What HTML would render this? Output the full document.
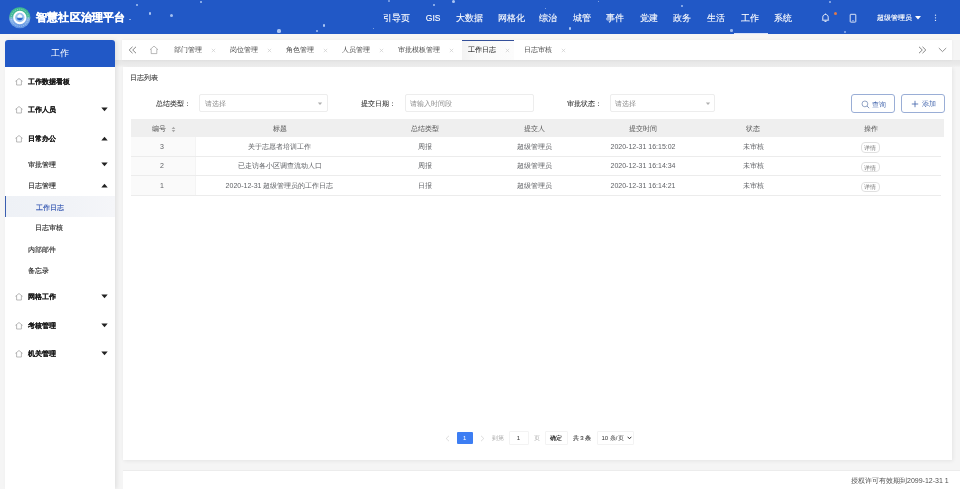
<!DOCTYPE html>
<html><head><meta charset="utf-8">
<style>
*{box-sizing:border-box;margin:0;padding:0}
html,body{width:960px;height:489px;overflow:hidden}
body{position:relative;will-change:transform;background:#f5f5f5;font-family:"Liberation Sans",sans-serif;color:#333;font-size:7px;line-height:1}
.a{position:absolute;white-space:nowrap}
#hdr{left:0;top:0;width:960px;height:34px;background:#2158c6;overflow:hidden}
#hdr .t{color:#fff;font-size:8.5px;top:14px;-webkit-text-stroke:0.1px #fff}
#side{left:5px;top:40px;width:110px;height:449px;background:#fff;border-radius:3px 3px 0 0;box-shadow:2px 0 4px rgba(0,0,0,.08)}
#sidehd{left:5px;top:40px;width:110px;height:27px;background:#2158c6;border-radius:3px 3px 0 0;color:#fff;font-size:9px;text-align:center;line-height:27px}
.mi{left:28px;font-size:7px;color:#2a2a2a;-webkit-text-stroke:0.12px}
.mb{font-weight:bold;color:#1a1a1a;-webkit-text-stroke:0.1px}
#strip{left:0;top:34px;width:960px;height:6px;background:#f7f6f4}
#tband{left:115px;top:60px;width:845px;height:7px;background:linear-gradient(#e5e5e5,#ebebeb 70%,#f2f2f2)}
#tabs{left:122px;top:40px;width:830px;height:20px;background:#fff;box-shadow:0 0 3px rgba(0,0,0,.05)}
.tab{top:45.8px;color:#4a4a4a;font-size:7px}
.x{top:47px;color:#bbb;font-size:6px}
#card{left:123px;top:67px;width:829px;height:393px;background:#fff;box-shadow:1px 1px 4px rgba(0,0,0,.07)}
.lbl{color:#2a2a2a;-webkit-text-stroke:0.05px}.ph{color:#8c8c8c}.inp{border:1px solid #ededed;border-radius:2px;background:#fff}.btn{border:1px solid #9aaed6;border-radius:3px}.th{color:#555}.td{color:#606266}.dbtn{border:1px solid #e0e0e0;border-radius:4px}.pgb{border:1px solid #f3f3f3;border-radius:1px;color:#333}
#foot{left:123px;top:470px;width:837px;height:19px;background:#fff;border-top:1px solid #ececec}
</style></head><body>
<div id="hdr" class="a"><div class="a" style="left:136.2px;top:4.2px;width:1.6px;height:1.6px;border-radius:50%;background:rgba(205,225,255,0.70)"></div><div class="a" style="left:148.8px;top:12.3px;width:2.4px;height:2.4px;border-radius:50%;background:rgba(205,225,255,0.80)"></div><div class="a" style="left:169.9px;top:13.8px;width:3.2px;height:3.2px;border-radius:50%;background:rgba(205,225,255,0.75)"></div><div class="a" style="left:200.2px;top:1.4px;width:1.6px;height:1.6px;border-radius:50%;background:rgba(205,225,255,0.70)"></div><div class="a" style="left:129.1px;top:18.6px;width:1.8px;height:1.8px;border-radius:50%;background:rgba(205,225,255,0.70)"></div><div class="a" style="left:277.4px;top:29.4px;width:3.2px;height:3.2px;border-radius:50%;background:rgba(205,225,255,0.80)"></div><div class="a" style="left:315.6px;top:29.6px;width:2.8px;height:2.8px;border-radius:50%;background:rgba(205,225,255,0.75)"></div><div class="a" style="left:322.6px;top:24.3px;width:2.8px;height:2.8px;border-radius:50%;background:rgba(205,225,255,0.80)"></div><div class="a" style="left:372.8px;top:27.9px;width:1.2px;height:1.2px;border-radius:50%;background:rgba(205,225,255,0.70)"></div><div class="a" style="left:432.8px;top:4.0px;width:1.8px;height:1.8px;border-radius:50%;background:rgba(205,225,255,0.75)"></div><div class="a" style="left:452.0px;top:-0.1px;width:3.0px;height:3.0px;border-radius:50%;background:rgba(205,225,255,0.80)"></div><div class="a" style="left:545.0px;top:7.5px;width:1.2px;height:1.2px;border-radius:50%;background:rgba(205,225,255,0.70)"></div><div class="a" style="left:568.7px;top:27.2px;width:2.6px;height:2.6px;border-radius:50%;background:rgba(205,225,255,0.80)"></div><div class="a" style="left:597.7px;top:0.6px;width:1.6px;height:1.6px;border-radius:50%;background:rgba(205,225,255,0.70)"></div><div class="a" style="left:680.6px;top:4.8px;width:2.4px;height:2.4px;border-radius:50%;background:rgba(205,225,255,0.75)"></div><div class="a" style="left:730.1px;top:29.1px;width:2.6px;height:2.6px;border-radius:50%;background:rgba(205,225,255,0.70)"></div><div class="a" style="left:828.6px;top:1.0px;width:2.4px;height:2.4px;border-radius:50%;background:rgba(205,225,255,0.70)"></div><div class="a" style="left:843.7px;top:30.7px;width:2.6px;height:2.6px;border-radius:50%;background:rgba(205,225,255,0.65)"></div><div class="a" style="left:387.5px;top:0.0px;width:2.0px;height:2.0px;border-radius:50%;background:rgba(205,225,255,0.60)"></div>
  <svg class="a" style="left:8px;top:6px" width="24" height="24" viewBox="0 0 24 24">
  <defs><linearGradient id="lg" x1="0" y1="0" x2="0" y2="1"><stop offset="0" stop-color="#3dbb8c"/><stop offset="0.42" stop-color="#45b89a"/><stop offset="0.58" stop-color="#86b3e8"/><stop offset="1" stop-color="#5b8fe2"/></linearGradient></defs>
  <circle cx="11.75" cy="11.75" r="10.6" fill="url(#lg)"/>
  <circle cx="11.75" cy="11.75" r="8.6" fill="none" stroke="#e8f4ff" stroke-width="0.9" stroke-dasharray="1.2 1" opacity="0.45"/>
  <circle cx="11.8" cy="11.5" r="5.7" fill="#9cc3ee" stroke="#fff" stroke-width="1.9"/>
  <path d="M11.8 7.9 L14.3 10 L13.8 11.9 H9.8 L9.3 10 Z" fill="#f4f9ff"/>
  <path d="M8.4 11.8 A3.5 3.5 0 0 0 15.2 11.8 Z" fill="#3b78d6"/>
  <path d="M9.8 12.6 A2.1 2.1 0 0 0 13.8 12.6 Z" fill="#2a5cc0"/>
</svg>
  <div class="a" style="left:36px;top:11.5px;color:#fff;font-size:10.6px;font-weight:bold;letter-spacing:0.2px;-webkit-text-stroke:0.25px #fff">智慧社区治理平台</div>
  <div class="a t" style="left:376.4px;width:40px;text-align:center">引导页</div>
  <div class="a t" style="left:413.2px;width:40px;text-align:center">GIS</div>
  <div class="a t" style="left:449.9px;width:40px;text-align:center">大数据</div>
  <div class="a t" style="left:491.1px;width:40px;text-align:center">网格化</div>
  <div class="a t" style="left:528.2px;width:40px;text-align:center">综治</div>
  <div class="a t" style="left:562.2px;width:40px;text-align:center">城管</div>
  <div class="a t" style="left:595.4px;width:40px;text-align:center">事件</div>
  <div class="a t" style="left:628.9px;width:40px;text-align:center">党建</div>
  <div class="a t" style="left:662.4px;width:40px;text-align:center">政务</div>
  <div class="a t" style="left:695.8px;width:40px;text-align:center">生活</div>
  <div class="a t" style="left:729.7px;width:40px;text-align:center">工作</div>
  <div class="a t" style="left:763.1px;width:40px;text-align:center">系统</div>
  <div class="a" style="left:734px;top:32.5px;width:34px;height:1.5px;background:rgba(235,242,255,.9)"></div>
  <div class="a t" style="left:877px;font-size:7px;top:14px;-webkit-text-stroke:0.12px #fff">超级管理员</div>
  <svg class="a" style="left:915px;top:15.5px" width="6" height="4" viewBox="0 0 6 4"><path d="M0 0H6L3 3.6Z" fill="#fff"/></svg>
  <svg class="a" style="left:934px;top:13px" width="3" height="9" viewBox="0 0 3 9"><circle cx="1.5" cy="2.2" r="0.65" fill="#e8efff"/><circle cx="1.5" cy="4.8" r="0.65" fill="#e8efff"/><circle cx="1.5" cy="7.4" r="0.65" fill="#e8efff"/></svg>
  <svg class="a" style="left:820px;top:12px" width="11" height="11" viewBox="0 0 11 11"><path d="M2.3 8.2 L2.8 7.4 V5.2 C2.8 3.6 3.9 2.5 5.5 2.5 C7.1 2.5 8.2 3.6 8.2 5.2 V7.4 L8.7 8.2 Z" fill="none" stroke="#fff" stroke-width="0.9" stroke-linejoin="round"/><path d="M4.5 9.4 H6.5" stroke="#fff" stroke-width="0.9"/><path d="M5.5 1.5 V2.5" stroke="#fff" stroke-width="0.8"/></svg>
  <div class="a" style="left:833.5px;top:12.3px;width:3px;height:3px;border-radius:50%;background:#e0794a"></div>
  <svg class="a" style="left:849px;top:13px" width="8" height="10" viewBox="0 0 8 10"><rect x="1.2" y="1.3" width="5.6" height="7.8" rx="0.6" fill="none" stroke="#fff" stroke-width="0.85"/><path d="M3.2 7.7 H4.8" stroke="#fff" stroke-width="0.6"/></svg>
</div>

<div id="strip" class="a"></div><div id="tband" class="a"></div>
<div id="side" class="a"></div>
<div id="sidehd" class="a">工作</div>
<div class="a mi mb" style="top:78.3px">工作数据看板</div>
<div class="a mi mb" style="top:106.3px">工作人员</div>
<div class="a mi mb" style="top:135.3px">日常办公</div>
<div class="a mi" style="top:161.3px">审批管理</div>
<div class="a mi" style="top:182.3px">日志管理</div>
<div class="a" style="left:5px;top:196.3px;width:110px;height:20.5px;background:linear-gradient(90deg,#eef1f6,#f1f3f7 60%,#f5f6f9);border-left:1px solid #3a5eb0"></div>
<div class="a mi" style="left:36px;top:204.3px;color:#2a4fae;-webkit-text-stroke:0.12px">工作日志</div>
<div class="a mi" style="left:35.3px;top:224.3px">日志审核</div>
<div class="a mi" style="top:246.3px">内部邮件</div>
<div class="a mi" style="top:267.3px">备忘录</div>
<div class="a mi mb" style="top:293.3px">网格工作</div>
<div class="a mi mb" style="top:322.3px">考核管理</div>
<div class="a mi mb" style="top:350.3px">机关管理</div>

<svg class="a" style="left:14.7px;top:76.9px" width="8" height="9" viewBox="0 0 8 9"><path d="M4 1.5 L7.3 4.2 H6.4 V8 H1.6 V4.2 H0.7 Z" fill="none" stroke="#808080" stroke-width="0.55" stroke-linejoin="miter"/></svg><svg class="a" style="left:14.7px;top:105.1px" width="8" height="9" viewBox="0 0 8 9"><path d="M4 1.5 L7.3 4.2 H6.4 V8 H1.6 V4.2 H0.7 Z" fill="none" stroke="#808080" stroke-width="0.55" stroke-linejoin="miter"/></svg><svg class="a" style="left:14.7px;top:133.8px" width="8" height="9" viewBox="0 0 8 9"><path d="M4 1.5 L7.3 4.2 H6.4 V8 H1.6 V4.2 H0.7 Z" fill="none" stroke="#808080" stroke-width="0.55" stroke-linejoin="miter"/></svg><svg class="a" style="left:14.7px;top:292.0px" width="8" height="9" viewBox="0 0 8 9"><path d="M4 1.5 L7.3 4.2 H6.4 V8 H1.6 V4.2 H0.7 Z" fill="none" stroke="#808080" stroke-width="0.55" stroke-linejoin="miter"/></svg><svg class="a" style="left:14.7px;top:320.7px" width="8" height="9" viewBox="0 0 8 9"><path d="M4 1.5 L7.3 4.2 H6.4 V8 H1.6 V4.2 H0.7 Z" fill="none" stroke="#808080" stroke-width="0.55" stroke-linejoin="miter"/></svg><svg class="a" style="left:14.7px;top:348.9px" width="8" height="9" viewBox="0 0 8 9"><path d="M4 1.5 L7.3 4.2 H6.4 V8 H1.6 V4.2 H0.7 Z" fill="none" stroke="#808080" stroke-width="0.55" stroke-linejoin="miter"/></svg><svg class="a" style="left:101px;top:107px" width="7" height="5" viewBox="0 0 7 5"><path d="M0.3 0.5 H6.7 L3.5 4.3Z" fill="#222"/></svg><svg class="a" style="left:101px;top:162px" width="7" height="5" viewBox="0 0 7 5"><path d="M0.3 0.5 H6.7 L3.5 4.3Z" fill="#222"/></svg><svg class="a" style="left:101px;top:294px" width="7" height="5" viewBox="0 0 7 5"><path d="M0.3 0.5 H6.7 L3.5 4.3Z" fill="#222"/></svg><svg class="a" style="left:101px;top:323px" width="7" height="5" viewBox="0 0 7 5"><path d="M0.3 0.5 H6.7 L3.5 4.3Z" fill="#222"/></svg><svg class="a" style="left:101px;top:351px" width="7" height="5" viewBox="0 0 7 5"><path d="M0.3 0.5 H6.7 L3.5 4.3Z" fill="#222"/></svg><svg class="a" style="left:101px;top:136px" width="7" height="5" viewBox="0 0 7 5"><path d="M0.3 4.5 H6.7 L3.5 0.7Z" fill="#222"/></svg><svg class="a" style="left:101px;top:183px" width="7" height="5" viewBox="0 0 7 5"><path d="M0.3 4.5 H6.7 L3.5 0.7Z" fill="#222"/></svg>
<div id="tabs" class="a"></div>
<div class="a tab" style="left:174px">部门管理</div>
<div class="a tab" style="left:230px">岗位管理</div>
<div class="a tab" style="left:286px">角色管理</div>
<div class="a tab" style="left:342px">人员管理</div>
<div class="a tab" style="left:398px">审批模板管理</div>
<div class="a" style="left:462px;top:40px;width:52px;height:20px;background:linear-gradient(90deg,#f3f3f3,#fafafa 30%,#fcfcfc);border-top:1px solid #34509a"></div>
<div class="a tab" style="left:468px;color:#2a2a2a;-webkit-text-stroke:0.05px">工作日志</div>
<div class="a tab" style="left:524px">日志审核</div>


<svg class="a" style="left:128px;top:46px" width="9" height="8" viewBox="0 0 9 8"><path d="M4.5 0.8 L1.2 4 L4.5 7.2 M8 0.8 L4.7 4 L8 7.2" fill="none" stroke="#666" stroke-width="0.8"/></svg>
<svg class="a" style="left:149px;top:45px" width="10" height="10" viewBox="0 0 10 10"><path d="M5 1.1 L8.7 4.4 H7.8 V8.6 H2.2 V4.4 H1.3 Z" fill="none" stroke="#8a8a8a" stroke-width="0.6" stroke-linejoin="miter"/></svg>
<svg class="a" style="left:918px;top:46px" width="9" height="8" viewBox="0 0 9 8"><path d="M1 0.8 L4.3 4 L1 7.2 M4.5 0.8 L7.8 4 L4.5 7.2" fill="none" stroke="#666" stroke-width="0.8"/></svg>
<svg class="a" style="left:938px;top:47px" width="9" height="6" viewBox="0 0 9 6"><path d="M0.8 1 L4.5 4.6 L8.2 1" fill="none" stroke="#777" stroke-width="0.8"/></svg>
<svg class="a" style="left:211.2px;top:47.5px" width="5" height="5" viewBox="0 0 5 5"><path d="M0.8 0.8 L4.2 4.2 M4.2 0.8 L0.8 4.2" stroke="#c8c8c8" stroke-width="0.6"/></svg>
<svg class="a" style="left:267.0px;top:47.5px" width="5" height="5" viewBox="0 0 5 5"><path d="M0.8 0.8 L4.2 4.2 M4.2 0.8 L0.8 4.2" stroke="#c8c8c8" stroke-width="0.6"/></svg>
<svg class="a" style="left:323.0px;top:47.5px" width="5" height="5" viewBox="0 0 5 5"><path d="M0.8 0.8 L4.2 4.2 M4.2 0.8 L0.8 4.2" stroke="#c8c8c8" stroke-width="0.6"/></svg>
<svg class="a" style="left:378.5px;top:47.5px" width="5" height="5" viewBox="0 0 5 5"><path d="M0.8 0.8 L4.2 4.2 M4.2 0.8 L0.8 4.2" stroke="#c8c8c8" stroke-width="0.6"/></svg>
<svg class="a" style="left:448.5px;top:47.5px" width="5" height="5" viewBox="0 0 5 5"><path d="M0.8 0.8 L4.2 4.2 M4.2 0.8 L0.8 4.2" stroke="#c8c8c8" stroke-width="0.6"/></svg>
<svg class="a" style="left:504.5px;top:47.5px" width="5" height="5" viewBox="0 0 5 5"><path d="M0.8 0.8 L4.2 4.2 M4.2 0.8 L0.8 4.2" stroke="#c8c8c8" stroke-width="0.6"/></svg>
<svg class="a" style="left:560.5px;top:47.5px" width="5" height="5" viewBox="0 0 5 5"><path d="M0.8 0.8 L4.2 4.2 M4.2 0.8 L0.8 4.2" stroke="#c8c8c8" stroke-width="0.6"/></svg>
<div id="card" class="a"></div>
<div class="a" style="left:130px;top:74px;color:#444;-webkit-text-stroke:0.12px">日志列表</div>


<div class="a lbl" style="left:156px;top:100.3px">总结类型：</div>
<div class="a inp" style="left:198.5px;top:94px;width:129px;height:18px"></div>
<div class="a ph" style="left:204.5px;top:100px">请选择</div>
<svg class="a" style="left:317px;top:101.5px" width="6" height="4" viewBox="0 0 6 4"><path d="M0.8 0.6 H5.2 L3 3Z" fill="#b0b0b0"/></svg>
<div class="a lbl" style="left:361px;top:100.3px">提交日期：</div>
<div class="a inp" style="left:404.5px;top:94px;width:129px;height:18px"></div>
<div class="a ph" style="left:410px;top:100px">请输入时间段</div>
<div class="a lbl" style="left:567px;top:100.3px">审批状态：</div>
<div class="a inp" style="left:610px;top:94px;width:105px;height:18px"></div>
<div class="a ph" style="left:615px;top:100px">请选择</div>
<svg class="a" style="left:705px;top:101.5px" width="6" height="4" viewBox="0 0 6 4"><path d="M0.8 0.6 H5.2 L3 3Z" fill="#b0b0b0"/></svg>
<div class="a btn" style="left:851px;top:94px;width:44px;height:18.8px"></div>
<svg class="a" style="left:860.5px;top:99.5px" width="9" height="9" viewBox="0 0 9 9"><circle cx="3.9" cy="3.9" r="2.9" fill="none" stroke="#7a8fb8" stroke-width="0.8"/><path d="M6 6 L8.2 8.2" stroke="#7a8fb8" stroke-width="0.9"/></svg>
<div class="a" style="left:871.5px;top:100.5px;color:#4a6bb0">查询</div>
<div class="a btn" style="left:901px;top:94px;width:44px;height:18.8px"></div>
<svg class="a" style="left:911.3px;top:100.3px" width="8" height="8" viewBox="0 0 8 8"><path d="M4 0.8 V7.2 M0.8 4 H7.2" stroke="#3d5fa8" stroke-width="0.8"/></svg>
<div class="a" style="left:922px;top:100px;color:#4a6bb0">添加</div>

<div class="a" style="left:130.5px;top:118.5px;width:813.5px;height:18px;background:#efefef"></div><div class="a" style="left:130.5px;top:136.5px;width:64px;height:58.5px;background:#fafafa"></div><div class="a" style="left:194.5px;top:136.5px;width:1px;height:58.5px;background:#f4f4f4"></div>
<div class="a th" style="left:152px;top:124.8px">编号</div>
<div class="a th" style="left:279.5px;top:124.8px;width:120px;margin-left:-60px;text-align:center">标题</div>
<div class="a th" style="left:425.0px;top:124.8px;width:120px;margin-left:-60px;text-align:center">总结类型</div>
<div class="a th" style="left:534.0px;top:124.8px;width:120px;margin-left:-60px;text-align:center">提交人</div>
<div class="a th" style="left:643.0px;top:124.8px;width:120px;margin-left:-60px;text-align:center">提交时间</div>
<div class="a th" style="left:753.0px;top:124.8px;width:120px;margin-left:-60px;text-align:center">状态</div>
<div class="a th" style="left:871px;top:124.8px;width:120px;margin-left:-60px;text-align:center">操作</div>
<svg class="a" style="left:171px;top:125.5px" width="5" height="7" viewBox="0 0 5 7"><path d="M0.7 2.9 L2.5 0.8 L4.3 2.9 Z M0.7 4.1 L2.5 6.2 L4.3 4.1 Z" fill="#a8a8a8"/></svg>
<div class="a td" style="left:162.0px;top:142.8px;width:160px;margin-left:-80px;text-align:center">3</div>
<div class="a td" style="left:279.5px;top:142.8px;width:160px;margin-left:-80px;text-align:center">关于志愿者培训工作</div>
<div class="a td" style="left:425.0px;top:142.8px;width:160px;margin-left:-80px;text-align:center">周报</div>
<div class="a td" style="left:534.0px;top:142.8px;width:160px;margin-left:-80px;text-align:center">超级管理员</div>
<div class="a td" style="left:643.0px;top:142.8px;width:160px;margin-left:-80px;text-align:center">2020-12-31 16:15:02</div>
<div class="a td" style="left:753.0px;top:142.8px;width:160px;margin-left:-80px;text-align:center">未审核</div>
<div class="a dbtn" style="left:861.3px;top:142.3px;width:18.5px;height:10.5px"></div>
<div class="a" style="left:864.3px;top:144.9px;font-size:6px;color:#808080">详情</div>
<div class="a" style="left:130.5px;top:155.8px;width:810px;height:1px;background:#ececec"></div>
<div class="a td" style="left:162.0px;top:162.4px;width:160px;margin-left:-80px;text-align:center">2</div>
<div class="a td" style="left:279.5px;top:162.4px;width:160px;margin-left:-80px;text-align:center">已走访各小区调查流动人口</div>
<div class="a td" style="left:425.0px;top:162.4px;width:160px;margin-left:-80px;text-align:center">周报</div>
<div class="a td" style="left:534.0px;top:162.4px;width:160px;margin-left:-80px;text-align:center">超级管理员</div>
<div class="a td" style="left:643.0px;top:162.4px;width:160px;margin-left:-80px;text-align:center">2020-12-31 16:14:34</div>
<div class="a td" style="left:753.0px;top:162.4px;width:160px;margin-left:-80px;text-align:center">未审核</div>
<div class="a dbtn" style="left:861.3px;top:161.9px;width:18.5px;height:10.5px"></div>
<div class="a" style="left:864.3px;top:164.5px;font-size:6px;color:#808080">详情</div>
<div class="a" style="left:130.5px;top:175.4px;width:810px;height:1px;background:#ececec"></div>
<div class="a td" style="left:162.0px;top:182.0px;width:160px;margin-left:-80px;text-align:center">1</div>
<div class="a td" style="left:279.5px;top:182.0px;width:160px;margin-left:-80px;text-align:center">2020-12-31 超级管理员的工作日志</div>
<div class="a td" style="left:425.0px;top:182.0px;width:160px;margin-left:-80px;text-align:center">日报</div>
<div class="a td" style="left:534.0px;top:182.0px;width:160px;margin-left:-80px;text-align:center">超级管理员</div>
<div class="a td" style="left:643.0px;top:182.0px;width:160px;margin-left:-80px;text-align:center">2020-12-31 16:14:21</div>
<div class="a td" style="left:753.0px;top:182.0px;width:160px;margin-left:-80px;text-align:center">未审核</div>
<div class="a dbtn" style="left:861.3px;top:181.5px;width:18.5px;height:10.5px"></div>
<div class="a" style="left:864.3px;top:184.1px;font-size:6px;color:#808080">详情</div>
<div class="a" style="left:130.5px;top:195.0px;width:810px;height:1px;background:#ececec"></div>


<svg class="a" style="left:445px;top:434.5px" width="5" height="7" viewBox="0 0 5 7"><path d="M4 0.8 L1.2 3.5 L4 6.2" fill="none" stroke="#d0d0d0" stroke-width="0.7"/></svg>
<div class="a" style="left:457px;top:431.5px;width:15.5px;height:12.5px;background:#3d7ef3;border-radius:1px;color:#fff;font-size:6px;text-align:center;line-height:12.5px">1</div>
<svg class="a" style="left:479.5px;top:434.5px" width="5" height="7" viewBox="0 0 5 7"><path d="M1 0.8 L3.8 3.5 L1 6.2" fill="none" stroke="#d0d0d0" stroke-width="0.7"/></svg>
<div class="a" style="left:491.5px;top:435px;color:#aaa;font-size:6px">到第</div>
<div class="a pgb" style="left:508.5px;top:431px;width:20px;height:13.5px;text-align:center;line-height:12px;font-size:6px">1</div>
<div class="a" style="left:533.7px;top:435px;color:#aaa;font-size:6px">页</div>
<div class="a pgb" style="left:544.5px;top:431px;width:23px;height:13.5px;text-align:center;line-height:12px;font-size:6px;color:#111;-webkit-text-stroke:0.12px">确定</div>
<div class="a" style="left:572.7px;top:435px;color:#444;font-size:6px;-webkit-text-stroke:0.12px">共 3 条</div>
<div class="a pgb" style="left:597px;top:431px;width:37px;height:13.5px;font-size:6px;color:#333;padding-left:3.5px;line-height:12px">10 条/页</div>
<svg class="a" style="left:626.5px;top:436px" width="5" height="4" viewBox="0 0 5 4"><path d="M0.7 0.8 L2.5 2.8 L4.3 0.8" fill="none" stroke="#222" stroke-width="0.9"/></svg>
<div id="foot" class="a"></div>
<div class="a" style="left:851px;top:476.5px;color:#505050">授权许可有效期到2099-12-31 1</div>
</body></html>
